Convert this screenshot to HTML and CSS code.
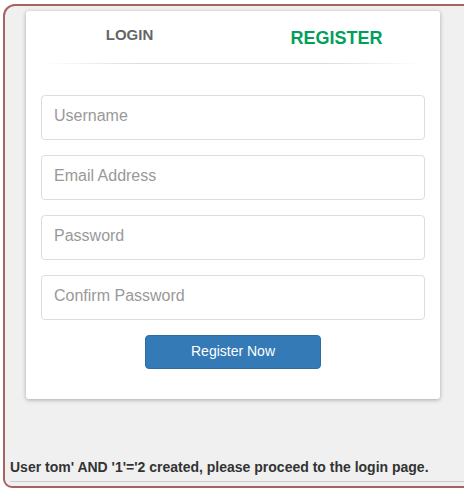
FILE: index.html
```html
<!DOCTYPE html>
<html>
<head>
<meta charset="utf-8">
<link rel="stylesheet" href="styles.css">
</head>
<body>
<div class="frame">
  <div class="card">
    <div class="tabs">
      <div class="tab tab-login">LOGIN</div>
      <div class="tab tab-register">REGISTER</div>
    </div>
    <div class="divider"></div>
    <form class="form">
      <input class="field" type="text" placeholder="Username">
      <input class="field" type="email" placeholder="Email Address">
      <input class="field" type="password" placeholder="Password">
      <input class="field" type="password" placeholder="Confirm Password">
      <div class="actions"><button type="button" class="btn">Register Now</button></div>
    </form>
  </div>
  <div class="message">User tom' AND '1'='2 created, please proceed to the login page.</div>
  <div class="rule"></div>
</div>
</body>
</html>
```
FILE: styles.css
```css
html, body {
  margin: 0;
  padding: 0;
  background: #ffffff;
  overflow: hidden;
  font-family: "Liberation Sans", Arial, sans-serif;
}
.frame {
  margin: 4px 0 0 3px;
  width: 500px;
  height: 484px;
  box-sizing: border-box;
  border: 2px solid #a86262;
  border-radius: 12px 0 0 9px;
  background: #f0f0f0;
  padding: 5px 0 0 5px;
}
.card {
  margin-left: 16px;
  width: 414px;
  box-sizing: border-box;
  background: #fff;
  border-radius: 3px;
  box-shadow: 0 1px 4px rgba(0,0,0,0.3);
  padding-bottom: 30px;
}
.tabs {
  display: flex;
}
.tab {
  flex: 1;
  text-align: center;
  font-weight: bold;
  padding-top: 14px;
}
.tab-login {
  font-size: 15px;
  line-height: 20px;
  color: #666;
}
.tab-register {
  font-size: 18px;
  line-height: 26px;
  color: #029f5b;
}
.divider {
  margin: 12px 19px 0;
  height: 1px;
  background: linear-gradient(to right, rgba(221,221,221,0), #ddd 25%, #ddd 75%, rgba(221,221,221,0));
}
.form {
  margin: 31px 15px 0;
  display: flex;
  flex-direction: column;
  gap: 15px;
}
.field {
  display: block;
  width: 100%;
  height: 45px;
  box-sizing: border-box;
  border: 1px solid #ddd;
  border-radius: 4px;
  padding: 0 12px 4px;
  font-family: "Liberation Sans", Arial, sans-serif;
  font-size: 16px;
  color: #555;
  background: #fff;
  outline: none;
}
.field::placeholder {
  color: #999;
}
.actions {
  display: flex;
  justify-content: center;
}
.btn {
  width: 176px;
  height: 34px;
  box-sizing: border-box;
  background: #337ab7;
  border: 1px solid #2e6da4;
  border-radius: 4px;
  color: #fff;
  font-family: "Liberation Sans", Arial, sans-serif;
  font-size: 14px;
  padding: 0 0 3px;
}
.message {
  margin-top: 58px;
  font-size: 14px;
  line-height: 20px;
  font-weight: bold;
  color: #333;
}
.rule {
  margin-top: 4px;
  height: 1px;
  background: #ccc;
}
```
